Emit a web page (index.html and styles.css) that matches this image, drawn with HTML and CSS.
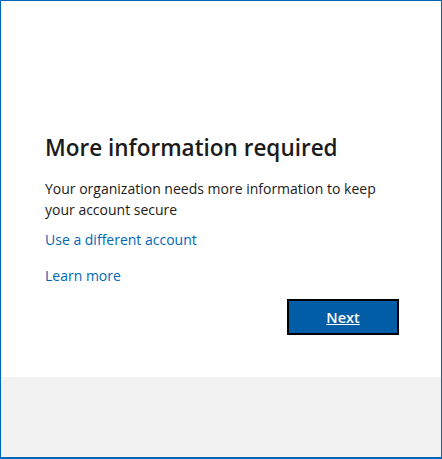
FILE: index.html
```html
<!DOCTYPE html>
<html>
<head>
<meta charset="utf-8">
<link rel="stylesheet" href="styles.css">
</head>
<body>
<div class="window">
  <div class="main">
    <h1 class="title">More information required</h1>
    <p class="desc">Your organization needs more information to keep your account secure</p>
    <a class="link link-first" href="#">Use a different account</a>
    <a class="link link-second" href="#">Learn more</a>
    <div class="actions">
      <button class="next">Next</button>
    </div>
  </div>
  <div class="footer"></div>
</div>
</body>
</html>
```
FILE: styles.css
```css
html, body {
  margin: 0;
  padding: 0;
}
body {
  width: 442px;
  height: 459px;
  font-family: "Open Sans", "Noto Sans", sans-serif;
  color: #1b1b1b;
}
.window {
  box-sizing: border-box;
  width: 442px;
  height: 459px;
  border: 1px solid #0067b8;
  border-bottom-width: 2px;
  display: flex;
  flex-direction: column;
}
.main {
  height: 376px;
  background: #fff;
  box-sizing: border-box;
  padding: 131px 42px 0 44px;
  display: flex;
  flex-direction: column;
}
.title {
  margin: 0;
  font-size: 22.5px;
  line-height: 32px;
  font-weight: 600;
  color: #1b1b1b;
}
.desc {
  margin: 14px 0 0;
  font-size: 14px;
  line-height: 21px;
  color: #1b1b1b;
}
.link {
  font-size: 14px;
  line-height: 20px;
  color: #0067b8;
  text-decoration: none;
  align-self: flex-start;
}
.link-first {
  margin-top: 10px;
}
.link-second {
  margin-top: 16px;
}
.actions {
  display: flex;
  justify-content: flex-end;
  margin-top: 13px;
}
.next {
  width: 112px;
  height: 36px;
  box-sizing: border-box;
  border: 2px solid #000;
  background: #005da6;
  color: #fff;
  font-family: inherit;
  font-size: 14.5px;
  font-weight: 600;
  text-decoration: underline;
  padding: 0;
}
.footer {
  flex: 1;
  background: #f2f2f2;
}
```
